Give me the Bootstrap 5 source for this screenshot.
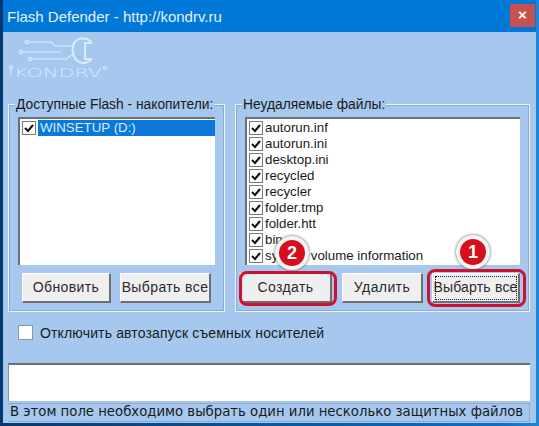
<!DOCTYPE html>
<html lang="ru">
<head>
  <meta charset="UTF-8">
  <meta name="viewport" content="width=device-width, initial-scale=1.0">
  <title>Flash Defender</title>
  <link href="https://cdn.jsdelivr.net/npm/bootstrap@5.3.1/dist/css/bootstrap.min.css" rel="stylesheet">
  <style>
    html, body { height: 100%; }
    body {
      width: 539px; height: 426px; overflow: hidden;
      background: linear-gradient(to right, #06396f 0, #06396f 3px, #0a6fc8 500px, #1a86dc 100%);
      font-family: "Liberation Sans", Arial, sans-serif;
      font-size: 13px; color: #1a1a1a;
    }
    .fd-window { position: relative; margin-left: 3px; width: 533px; height: 423px; background: #a6c8ef; }
    .fd-title { height: 32px; background: #0078d7; color: #e6f1fb; font-size: 15px; padding-left: 4px; }
    .fd-title-text { padding-top: 7px; line-height: 20px; }
    .fd-close { width: 25px; height: 23px; margin-top: 4px; margin-right: 1px; background: #c75050; color: #fff; font-size: 15px; font-weight: 700; line-height: 22px; }
    .fd-logo { height: 72px; padding-left: 6px; padding-top: 5px; }
    .fd-groups { height: 208px; padding: 0 6px 0 5px; gap: 10px; }
    .fd-group { position: relative; border: 1px solid #eef4fb; outline: 1px solid #8fa9c8; outline-offset: -2px; height: 208px; padding: 12px 9px 0 9px; }
    .fd-group-l { width: 217px; }
    .fd-group-r { width: 295px; }
    .fd-legend { position: absolute; left: 6px; top: -8px; background: #a6c8ef; padding: 0 1px; line-height: 15px; font-size: 13.8px; }
    .fd-list { height: 148px; background: #fff; border-top: 2px solid #6b6f76; border-left: 2px solid #6b6f76; padding: 1px 0 0 1px; overflow: hidden; }
    .fd-item { height: 16px; line-height: 16px; font-size: 13.3px; }
    .fd-box { width: 14px; height: 14px; background: #fff; border: 1px solid #77797c; flex: none; margin: 1px 2px 0 1px; }
    .fd-box svg { display: block; }
    .fd-sel { background: #0a78d8; color: #dcecfb; flex: 1; padding-left: 2px; }
    .fd-btn { height: 30px; background: #efefef; border: 1px solid #fff; border-right: 2px solid #6e6e6e; border-bottom: 2px solid #6e6e6e; border-radius: 0; padding: 0; font-size: 14px; color: #2b2b2b; font-family: "Liberation Sans", Arial, sans-serif; letter-spacing: .4px; }
    .fd-btns { margin-top: 8px; }
    .fd-focus { outline: 1px dotted #222; outline-offset: -4px; letter-spacing: .2px; }
    .fd-auto { height: 51px; padding-left: 15px; padding-top: 13px; font-size: 14px; letter-spacing: .15px; }
    .fd-auto-text { margin-top: -2px; }
    .fd-check { width: 15px; height: 15px; background: #fff; border: 1px solid #8a96a6; margin-right: 7px; flex: none; }
    .fd-memo { height: 38px; margin: 0 6px 0 5px; background: #fff; border-top: 2px solid #6b6f76; border-left: 1px solid #8a8f96; }
    .fd-status { margin: 2px 6px 0 5px; height: 19px; border: 1px solid #8fa9c8; border-left: 0; line-height: 16px; padding-left: 2px; font-family: "DejaVu Sans", sans-serif; font-size: 13.25px; white-space: nowrap; }
    .fd-ring { position: absolute; border: 3px solid #cf1030; border-radius: 8px; }
    .fd-ring-1 { left: 424px; top: 269px; width: 99px; height: 38px; }
    .fd-ring-2 { left: 236px; top: 271px; width: 98px; height: 35px; }
    .fd-num { position: absolute; width: 34px; height: 34px; border-radius: 50%; background: #d5101c; color: #fff; border: 4px solid #f4f4f4; font-weight: 700; font-size: 18px; line-height: 26px; text-align: center; box-shadow: 0 0 3px #555; }
    .fd-num-1 { left: 453px; top: 235px; }
    .fd-num-2 { left: 272px; top: 236px; }
  </style>
</head>
<body>
  <div class="fd-window">
    <!-- title bar -->
    <div class="fd-title d-flex justify-content-between align-items-start">
      <span class="fd-title-text">Flash Defender - http://kondrv.ru</span>
      <span class="fd-close text-center">×</span>
    </div>

    <!-- logo -->
    <div class="fd-logo">
      <svg width="104" height="48" viewBox="0 0 104 48" fill="none" stroke="#dcebfb" stroke-width="1.2">
        <path d="M20 5H42L46 9H64M14 15H52M23 22H58L62 18H66"/>
        <circle cx="18" cy="5" r="1.7"/><circle cx="12" cy="15" r="1.7"/><circle cx="21" cy="22" r="1.7"/>
        <path d="M83 6C79 0 69 0 65 6C62 13 64 22 70 25C74 27 80 26 83 22M83 6H76V22H83" stroke-width="2"/>
        <path d="M2 31V38"/>
        <circle cx="2" cy="30" r="1.5"/><circle cx="96" cy="31" r="1.5"/>
        <text x="5" y="40" textLength="88" lengthAdjust="spacingAndGlyphs" font-family="DejaVu Sans" font-weight="200" font-size="12" fill="#dcebfb" stroke="none">KONDRV</text>
      </svg>
    </div>

    <!-- lists -->
    <div class="fd-groups d-flex">
      <div class="fd-group fd-group-l">
        <span class="fd-legend">Доступные Flash - накопители:</span>
        <div class="fd-list">
          <div class="fd-item d-flex"><span class="fd-box"><svg width="12" height="12" viewBox="0 0 12 12"><path d="M2 6l3 3 5-6" fill="none" stroke="#111" stroke-width="2"/></svg></span><span class="fd-sel">WINSETUP (D:)</span></div>
        </div>
        <div class="fd-btns d-flex justify-content-between px-1">
          <button class="fd-btn" style="width:89px">Обновить</button>
          <button class="fd-btn" style="width:91px">Выбрать все</button>
        </div>
      </div>
      <div class="fd-group fd-group-r">
        <span class="fd-legend">Неудаляемые файлы:</span>
        <div class="fd-list" id="files"></div>
        <div class="fd-btns d-flex">
          <button class="fd-btn" style="width:92px;margin-left:-5px">Создать</button>
          <button class="fd-btn" style="width:81px;margin-left:10px">Удалить</button>
          <button class="fd-btn fd-focus" style="width:88px;margin-left:9px">Выбарть все</button>
        </div>
      </div>
    </div>

    <!-- autorun -->
    <div class="fd-auto d-flex align-items-start">
      <span class="fd-check"></span>
      <span class="fd-auto-text">Отключить автозапуск съемных носителей</span>
    </div>

    <div class="fd-memo"></div>
    <div class="fd-status">В этом поле необходимо выбрать один или несколько защитных файлов</div>

    <!-- annotations -->
    <span class="fd-ring fd-ring-1"></span>
    <span class="fd-ring fd-ring-2"></span>
    <span class="fd-num fd-num-1">1</span>
    <span class="fd-num fd-num-2">2</span>
  </div>

  <script>
    const files = ["autorun.inf", "autorun.ini", "desktop.ini", "recycled", "recycler", "folder.tmp", "folder.htt", "bin", "system volume information"];
    document.getElementById("files").innerHTML = files.map(name => `
      <div class="fd-item d-flex"><span class="fd-box"><svg width="12" height="12" viewBox="0 0 12 12"><path d="M2 6l3 3 5-6" fill="none" stroke="#111" stroke-width="2"/></svg></span><span>${name}</span></div>
    `).join("");
  </script>
  <script src="https://cdn.jsdelivr.net/npm/bootstrap@5.3.1/dist/js/bootstrap.bundle.min.js"></script>
</body>
</html>
